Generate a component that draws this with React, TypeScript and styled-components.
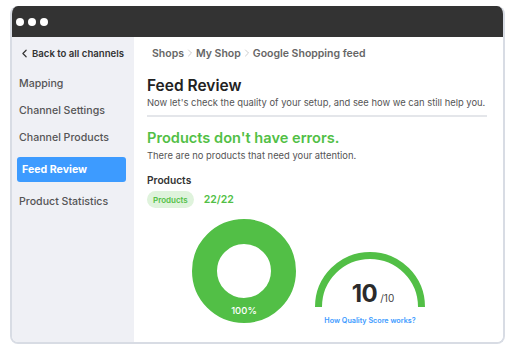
import styled, { createGlobalStyle } from "styled-components";
import { ChevronLeft, ChevronRight } from "lucide-react";

const GlobalStyle = createGlobalStyle`
  * { box-sizing: border-box; }
  body {
    margin: 0;
    background: #fff;
    font-family: "Inter", "Open Sans", sans-serif;
    color: #333;
  }
`;

const GREEN = "#52bf46";
const BLUE = "#3d9bff";

const navItems = ["Mapping", "Channel Settings", "Channel Products", "Feed Review", "Product Statistics"];

export default function App() {
  return (
    <>
      <GlobalStyle />
      <Window>
        <TitleBar>
          <Dot />
          <Dot />
          <Dot />
        </TitleBar>
        <Body>
          <Sidebar>
            <BackLink>
              <ChevronLeft size={13} strokeWidth={2.2} />
              <span>Back to all channels</span>
            </BackLink>
            {navItems.map((item) => (
              <NavItem key={item} $active={item === "Feed Review"}>
                {item}
              </NavItem>
            ))}
          </Sidebar>
          <Main>
            <Breadcrumb>
              <span>Shops</span>
              <Sep size={12} strokeWidth={1.2} />
              <span>My Shop</span>
              <Sep size={12} strokeWidth={1.2} />
              <span>Google Shopping feed</span>
            </Breadcrumb>
            <Title>Feed Review</Title>
            <Subtitle>Now let's check the quality of your setup, and see how we can still help you.</Subtitle>
            <Divider />
            <Success>Products don't have errors.</Success>
            <Subtitle>There are no products that need your attention.</Subtitle>
            <SectionLabel>Products</SectionLabel>
            <CountRow>
              <Pill>Products</Pill>
              <Count>22/22</Count>
            </CountRow>
            <Charts>
              <svg width="104" height="104" viewBox="0 0 104 104">
                <circle cx="52" cy="52" r="39.5" fill="none" stroke={GREEN} strokeWidth="25" />
                <DonutLabel x="52" y="94.5" textAnchor="middle">100%</DonutLabel>
              </svg>
              <Gauge>
                <GaugeArc>
                  <svg width="110" height="55" viewBox="0 0 110 55">
                    <path d="M 3.5 55 A 51.5 51.5 0 0 1 106.5 55" fill="none" stroke={GREEN} strokeWidth="7" />
                  </svg>
                  <Score>
                    <Big>10</Big>
                    <Small>/10</Small>
                  </Score>
                </GaugeArc>
                <HelpLink>How Quality Score works?</HelpLink>
              </Gauge>
            </Charts>
          </Main>
        </Body>
      </Window>
    </>
  );
}

const Window = styled.div`
  margin: 6px 0 0 10px;
  width: 495px;
  height: 338px;
  display: flex;
  flex-direction: column;
  border-radius: 8px;
  overflow: hidden;
  border: 2px solid #d8dce4;
  border-top: none;
`;

const TitleBar = styled.div`
  height: 31px;
  background: #333333;
  display: flex;
  align-items: center;
  gap: 4px;
  padding-left: 6px;
  margin: 0 -2px;
`;

const Dot = styled.span`
  width: 8px;
  height: 8px;
  border-radius: 50%;
  background: #fff;
`;

const Body = styled.div`
  flex: 1;
  display: flex;
  min-height: 0;
`;

const Sidebar = styled.nav`
  width: 122px;
  background: #eff0f5;
  padding: 7px 8px 0 5px;
  display: flex;
  flex-direction: column;
`;

const BackLink = styled.div`
  height: 18px;
  display: flex;
  align-items: center;
  gap: 1px;
  margin: 0 0 8px 1px;
  font-size: 9.6px;
  font-weight: 600;
  color: #333;
`;

const NavItem = styled.div<{ $active?: boolean }>`
  display: flex;
  align-items: center;
  font-size: 10.6px;
  color: ${(p) => (p.$active ? "#fff" : "#555")};
  font-weight: ${(p) => (p.$active ? 700 : 500)};
  height: ${(p) => (p.$active ? "25px" : "27px")};
  margin: ${(p) => (p.$active ? "6px 0" : "0")};
  padding-left: ${(p) => (p.$active ? "5px" : "2px")};
  background: ${(p) => (p.$active ? BLUE : "transparent")};
  border-radius: 3px;
`;

const Main = styled.main`
  flex: 1;
  background: #fff;
  padding: 6px 16px 0 13px;
  display: flex;
  flex-direction: column;
`;

const Breadcrumb = styled.div`
  height: 20px;
  display: flex;
  align-items: center;
  padding-left: 5px;
  font-size: 10.5px;
  font-weight: 600;
  color: #666;
  margin-bottom: 13px;
`;

const Sep = styled(ChevronRight)`
  color: #aaa;
  margin: 0;
`;

const Title = styled.h1`
  margin: 0;
  font-size: 15.5px;
  font-weight: 600;
  color: #222;
  line-height: 20px;
`;

const Subtitle = styled.p`
  margin: 0;
  font-size: 9.4px;
  line-height: 14px;
  color: #555;
`;

const Divider = styled.div`
  height: 2px;
  background: #e4e6ea;
  margin: 5px 0 11px;
`;

const Success = styled.h2`
  margin: 0;
  font-size: 14.6px;
  font-weight: 600;
  color: ${GREEN};
  line-height: 20px;
  margin-bottom: 1px;
`;

const SectionLabel = styled.div`
  margin-top: 10px;
  font-size: 10.2px;
  font-weight: 600;
  color: #333;
  line-height: 14px;
`;

const CountRow = styled.div`
  display: flex;
  align-items: center;
  gap: 10px;
  margin-top: 4px;
`;

const Pill = styled.span`
  height: 17px;
  padding: 0 6px;
  display: flex;
  align-items: center;
  background: #dff3dc;
  border-radius: 9px;
  color: ${GREEN};
  font-size: 8px;
  font-weight: 600;
`;

const Count = styled.span`
  color: ${GREEN};
  font-size: 10.5px;
  font-weight: 600;
`;

const Charts = styled.div`
  display: flex;
  align-items: flex-start;
  gap: 19px;
  padding-left: 45px;
  margin-top: 11px;
`;

const DonutLabel = styled.text`
  fill: #fff;
  font-size: 9.5px;
  font-weight: 500;
  font-family: "Inter", sans-serif;
`;

const Gauge = styled.div`
  margin-top: 33px;
  width: 110px;
  display: flex;
  flex-direction: column;
  align-items: center;
`;

const GaugeArc = styled.div`
  position: relative;
  width: 110px;
  height: 55px;
`;

const Score = styled.div`
  position: absolute;
  left: 0;
  right: 0;
  bottom: -1px;
  display: flex;
  justify-content: center;
  align-items: baseline;
  gap: 3px;
  padding-left: 6px;
`;

const Big = styled.span`
  font-size: 24px;
  font-weight: 700;
  color: #2b2b2b;
  letter-spacing: -0.5px;
`;

const Small = styled.span`
  font-size: 10px;
  color: #444;
`;

const HelpLink = styled.a`
  margin-top: 9px;
  font-size: 7.2px;
  font-weight: 600;
  color: ${BLUE};
`;
